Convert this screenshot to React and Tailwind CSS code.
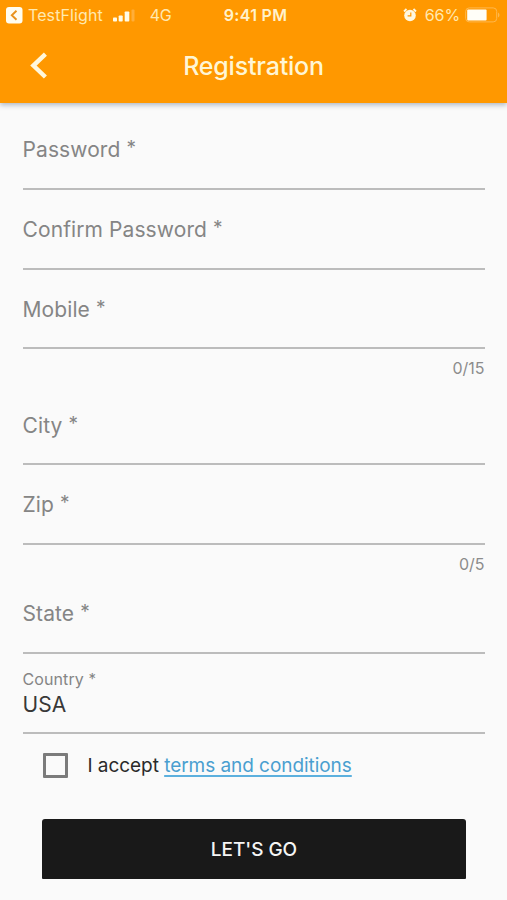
const fields = [
  { label: 'Password' },
  { label: 'Confirm Password' },
  { label: 'Mobile', counter: '0/15', counterClass: 'h-[36.4px]' },
  { label: 'City' },
  { label: 'Zip', counter: '0/5', counterClass: 'h-[29.6px]' },
  { label: 'State' },
  { label: 'Country', value: 'USA' },
];

function StatusBar() {
  return (
    <div className="grid h-[30px] grid-cols-[1fr_auto_1fr] items-center pl-[6px] pr-[7px] text-[16px] leading-5 text-[#ffe9b0]">
      <div className="flex items-center">
        <svg width="17" height="17" viewBox="0 0 17 17" aria-hidden="true">
          <rect width="16.5" height="16.5" rx="3" fill="#fffdf0" />
          <path d="M10.5 3.8 5.8 8.3l4.7 4.5" fill="none" stroke="#e8921c" strokeWidth="1.9" />
        </svg>
        <span className="ml-[5px] tracking-[0.1px]">TestFlight</span>
        <svg className="ml-[10px]" width="23" height="13" viewBox="0 0 23 13" aria-hidden="true">
          <g fill="#fffbe6">
            <rect x="0" y="8.5" width="4" height="4" rx="0.8" />
            <rect x="5.7" y="6.5" width="4" height="6" rx="0.8" />
            <rect x="11.7" y="2.5" width="4.6" height="10" rx="0.8" />
          </g>
          <rect x="18.5" y="0.5" width="3" height="12" rx="1" fill="#ffae3a" />
        </svg>
        <span className="ml-[14px] tracking-[-0.3px]">4G</span>
      </div>
      <span className="pl-[5px] font-semibold tracking-[0.3px] text-[#fff2cc]">9:41 PM</span>
      <div className="flex items-center justify-end">
        <svg className="-mt-px" width="14" height="14" viewBox="0 0 14 14" aria-hidden="true">
          <circle cx="7" cy="7.5" r="5.8" fill="#fff8e0" />
          <path d="M1 3.5 3.5 1M13 3.5 10.5 1" stroke="#fff8e0" strokeWidth="1.8" />
          <path d="M7.8 4.5v3.3H4.6" fill="none" stroke="#ff9800" strokeWidth="1.2" />
        </svg>
        <span className="ml-2 tracking-[-0.1px]">66%</span>
        <svg className="ml-[5px]" width="35" height="16" viewBox="0 0 35 16" aria-hidden="true">
          <rect x="0.7" y="0.9" width="31" height="14" rx="3.5" fill="none" stroke="#ffb84d" strokeWidth="1" />
          <rect x="2.2" y="2.6" width="19.4" height="10.8" rx="1" fill="#fffef8" />
          <path d="M33 5.5c2 1 2 4 0 5z" fill="#ffb84d" />
        </svg>
      </div>
    </div>
  );
}

function Field({ label, value, counter, counterClass }) {
  return (
    <div>
      <div className="flex h-[79.6px] flex-col border-b-2 border-[#bcbcbc] text-[#858585]">
        {value ? (
          <>
            <span className="mt-[15px] h-5 text-[16px] leading-5 tracking-[0.1px]">
              {label} <span className="align-[1.5px] text-[15px] leading-none">*</span>
            </span>
            <span className="mt-[2px] text-[21px] leading-7 tracking-[0.1px] text-[#383838]">{value}</span>
          </>
        ) : (
          <span className="mt-[26px] h-7 text-[21px] leading-7 tracking-[0.1px]">
            {label} <span className="align-[3px] text-[19px] leading-none">*</span>
          </span>
        )}
      </div>
      {counter && (
        <div className={`pt-[9px] text-right text-[16px] leading-5 text-[#8c8c8c] ${counterClass}`}>{counter}</div>
      )}
    </div>
  );
}

export default function App() {
  return (
    <div className="flex h-[900px] w-[507px] flex-col overflow-hidden bg-[#fafafa] font-['Inter','Liberation_Sans',sans-serif]">
      <header className="h-[103px] shrink-0 bg-[#ff9800] shadow-[0_2px_5px_rgba(60,80,110,0.4)]">
        <StatusBar />
        <div className="grid h-[72px] grid-cols-[1fr_auto_1fr] items-center px-[30px]">
          <button type="button" aria-label="Back">
            <svg width="18" height="28" viewBox="0 0 18 28" aria-hidden="true">
              <path d="M15.4 2.2 3.4 13.6l12 11.4" fill="none" stroke="#fff7dc" strokeWidth="4.4" />
            </svg>
          </button>
          <h1 className="text-[25px] font-medium leading-8 tracking-[-0.2px] text-[#fff6d4]">Registration</h1>
        </div>
      </header>

      <main className="px-[22.5px] pt-[7.4px]">
        {fields.map((field) => (
          <Field key={field.label} {...field} />
        ))}

        <div className="mt-[18px] flex items-center pl-5">
          <span className="size-[25px] rounded-[1px] border-3 border-[#7b7b7b]" />
          <p className="ml-5 text-[19px] leading-7 tracking-[-0.05px] text-[#2a2a2a]">
            I accept{' '}
            <a className="text-[#4a9fd0] underline decoration-[#5cb0de] decoration-[1.5px] underline-offset-[3px]">
              terms and conditions
            </a>
          </p>
        </div>

        <button
          type="button"
          className="mx-[19.5px] mt-[39px] block h-[60px] w-[424px] rounded-t-[3px] rounded-b-[1px] bg-[#191919] pt-[4px] text-[19px] font-medium tracking-[-0.05px] text-[#f5f5f5]"
        >
          LET'S GO
        </button>
      </main>
    </div>
  );
}
